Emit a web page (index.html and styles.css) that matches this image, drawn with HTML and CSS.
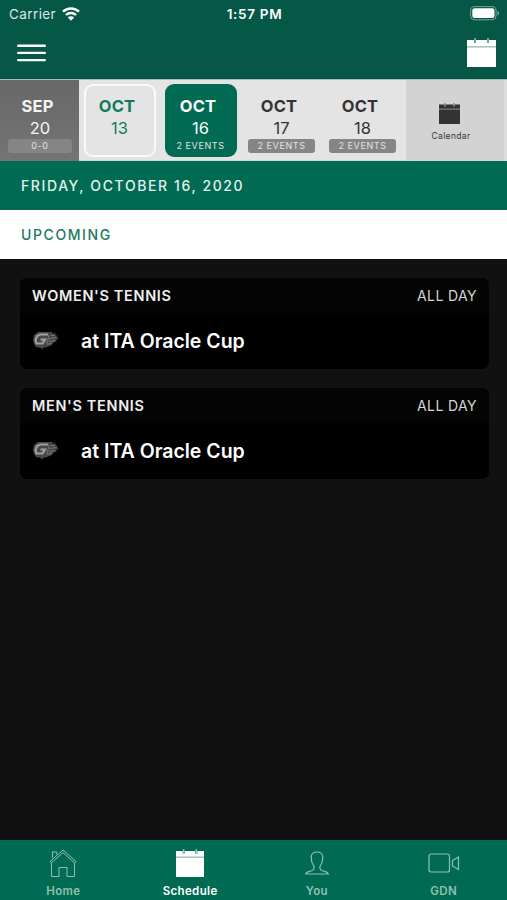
FILE: index.html
```html
<!DOCTYPE html>
<html lang="en">
<head>
    <meta charset="UTF-8">
    <meta name="viewport" content="width=device-width, initial-scale=1.0">
    <title>Schedule</title>
    <link rel="stylesheet" href="styles.css">
</head>
<body>
    <svg width="0" height="0" class="sprites">
        <symbol id="calendar" viewBox="0 0 29 29">
            <path fill="currentColor" d="M0 2h7v3h2V2h11v3h2V2h7v6H0zM0 9.3h29V29H0z"/>
            <path fill="currentColor" opacity=".65" d="M7.3 0h1.4v5H7.3zM20.3 0h1.4v5h-1.4zM0 8h29v1.3H0z"/>
        </symbol>
        <symbol id="team" viewBox="0 0 26 19">
            <path fill="#484848" d="M5 1h15l-1 2 4-1-1 2 3 1-2 1 3 1-3 2 1 1-4 2-1 2-5 2-4 1-1 2-1-2-5-1-2-3-1-4 1-5z"/>
            <path fill="none" stroke="#a0a0a0" stroke-width="2.2" d="M15 3.500H7.500L4 5 2.500 9l1 3.500h6L12 8.500H7.500"/>
            <path fill="none" stroke="#757575" d="M16 4l-2 9M18 4.500h4M16.500 7.500l7-1M16 10.500l6-1M14 13.500l5-1.500"/>
        </symbol>
    </svg>
    <div class="app">
        <header class="header">
            <div class="status">
                <div class="carrier">
                    <span>Carrier</span>
                    <svg width="18" height="14" viewBox="0 0 18 14" fill="none" stroke="#fff" stroke-width="2.4">
                        <path d="M1 4.700a11.500 11.500 0 0 1 16 0M4 8a7.300 7.300 0 0 1 10 0"/>
                        <path fill="#fff" stroke="none" d="M5.800 10.500a4.500 4.500 0 0 1 6.400 0L9 13.700z"/>
                    </svg>
                </div>
                <span class="time">1:57 PM</span>
                <svg class="battery" width="30" height="15" viewBox="0 0 30 15">
                    <rect x=".6" y=".6" width="25.500" height="13.200" rx="4" fill="none" stroke="#fff" stroke-opacity=".45"/>
                    <rect x="2.300" y="2.300" width="22.200" height="9.800" rx="2.300" fill="#fff"/>
                    <path fill="#fff" fill-opacity=".5" d="M27.500 5c2 .6 2 4 0 4.600z"/>
                </svg>
            </div>
            <div class="toolbar">
                <svg class="menu" width="29" height="18" viewBox="0 0 29 18" stroke="#fff" stroke-width="2.4" stroke-linecap="round">
                    <path d="M1.200 1.700h26.600M1.200 8.900h26.600M1.200 16.100h26.600"/>
                </svg>
                <svg class="header-calendar"><use href="#calendar"/></svg>
            </div>
        </header>

        <div class="days">
            <div class="day past">
                <div class="tile"><b>SEP</b><span>20</span><small>0-0</small></div>
            </div>
            <div class="day today">
                <div class="tile"><b>OCT</b><span>13</span></div>
            </div>
            <div class="day selected">
                <div class="tile"><b>OCT</b><span>16</span><small>2 EVENTS</small></div>
            </div>
            <div class="day">
                <div class="tile"><b>OCT</b><span>17</span><small>2 EVENTS</small></div>
            </div>
            <div class="day">
                <div class="tile"><b>OCT</b><span>18</span><small>2 EVENTS</small></div>
            </div>
            <div class="full-calendar">
                <svg><use href="#calendar"/></svg>
                <span>Calendar</span>
            </div>
        </div>

        <div class="date">FRIDAY, OCTOBER 16, 2020</div>
        <div class="section">UPCOMING</div>

        <main class="events">
            <div class="event">
                <div class="event-top"><b>WOMEN'S TENNIS</b><span>ALL DAY</span></div>
                <div class="event-body">
                    <svg><use href="#team"/></svg>
                    <span>at ITA Oracle Cup</span>
                </div>
            </div>
            <div class="event">
                <div class="event-top"><b>MEN'S TENNIS</b><span>ALL DAY</span></div>
                <div class="event-body">
                    <svg><use href="#team"/></svg>
                    <span>at ITA Oracle Cup</span>
                </div>
            </div>
        </main>

        <nav class="tabs">
            <div class="tab">
                <svg width="28" height="30" viewBox="0 0 28 30" fill="none" stroke="currentColor">
                    <path d="M1 13.500L14 2l13 11.500-1.300 1.500L14 4.600 2.300 15zM3.500 9.800V4h4.200v2.500M2.500 15v13.500H10v-9h8v9h7.500V15"/>
                </svg>
                <span>Home</span>
            </div>
            <div class="tab active">
                <svg width="28" height="30" viewBox="0 0 28 30"><use href="#calendar" y="1" width="28" height="28"/></svg>
                <span>Schedule</span>
            </div>
            <div class="tab">
                <svg width="28" height="30" viewBox="0 0 28 30" fill="none" stroke="currentColor" stroke-width="1.200">
                    <path d="M11 18.500c-2-3-3-6-2.800-9.500C8.400 5.500 11 4 14 4s5.600 1.500 5.800 5c.2 3.500-.8 6.500-2.800 9.500-.6 2.500.2 3.500 2.500 4.200l3.500 1.200c1.500.6 2 1.100 2.300 2.100H2.700c.3-1 .8-1.500 2.300-2.100l3.500-1.200c2.300-.7 3.100-1.700 2.500-4.200z"/>
                </svg>
                <span>You</span>
            </div>
            <div class="tab">
                <svg width="32" height="30" viewBox="0 0 32 30" fill="none" stroke="currentColor" stroke-width="1.200">
                    <rect x="1" y="6" width="20.500" height="18" rx="2"/>
                    <path d="M24.500 12.500l6-3.500v12.500l-6-3.500z"/>
                </svg>
                <span>GDN</span>
            </div>
        </nav>
    </div>
</body>
</html>
```

FILE: styles.css
```css
* {
    box-sizing: border-box;
}

body {
    margin: 0;
    font-family: Inter, "Liberation Sans", sans-serif;
    background-color: #111;
    color: #fff;
}

svg {
    display: block;
    flex: none;
}

.sprites {
    position: absolute;
}

.app {
    display: flex;
    flex-direction: column;
    height: 900px;
}

.header {
    height: 79px;
    background-color: #055846;
}

.status {
    display: grid;
    grid-template-columns: 1fr auto 1fr;
    align-items: center;
    height: 27px;
    padding: 0 7px 0 9px;
    font-size: 13.5px;
}

.carrier {
    display: flex;
    align-items: center;
    gap: 6px;
    color: #d8e8e2;
    letter-spacing: 0.4px;
}

.time {
    font-size: 13.5px;
    font-weight: 600;
    letter-spacing: 0.7px;
}

.battery {
    justify-self: end;
}

.toolbar {
    display: flex;
    justify-content: space-between;
    padding: 11px 11px 0 17px;
}

.menu {
    margin-top: 6px;
}

.header-calendar {
    width: 29px;
    height: 29px;
}

.days {
    display: grid;
    grid-template-columns: 79px 81px 81px 81px 84px 101px;
    height: 82px;
    background-color: #e4e4e4;
    border-top: 1px solid #a5bfb8;
    border-bottom: 1px solid #c4ddd5;
    color: #333;
}

.day {
    padding: 4px 4px 4px 4.5px;
}

.tile {
    display: flex;
    flex-direction: column;
    align-items: center;
    width: 72px;
    height: 73px;
    padding-top: 11px;
    border-radius: 9px;
}

.tile b {
    margin-right: 5px;
    font-size: 16.5px;
    font-weight: 700;
    line-height: 22px;
    letter-spacing: 0.2px;
}

.tile span {
    font-size: 16.5px;
    line-height: 22px;
}

.tile small {
    width: 67px;
    height: 14px;
    border-radius: 3px;
    background-color: #858585;
    color: #e2e2e2;
    font-size: 9px;
    line-height: 14px;
    letter-spacing: 0.6px;
    text-align: center;
}

.past {
    padding-left: 4px;
    background: linear-gradient(#686868, #747474);
    color: #f4f4f4;
}

.past small {
    width: 64px;
}

.today .tile {
    padding-top: 9px;
    border: 2px solid #fafafa;
    color: #117b59;
}

.selected .tile {
    background-color: #006b52;
    color: #fff;
}

.selected small {
    background: none;
}

.full-calendar {
    display: flex;
    flex-direction: column;
    align-items: center;
    padding: 23px 8px 0 0;
    background-color: #d3d3d3;
    border-right: 3px solid #dcdcdc;
    font-size: 8.5px;
    letter-spacing: 0.35px;
}

.full-calendar svg {
    width: 21px;
    height: 21px;
    margin: 0 4px 7px 0;
}

.date,
.section {
    height: 49px;
    padding-left: 21px;
    font-size: 14px;
    font-weight: 500;
    line-height: 49px;
    letter-spacing: 1.6px;
}

.date {
    background-color: #006b52;
    color: #e3f2ed;
}

.section {
    background-color: #fff;
    color: #187b5d;
}

.events {
    display: flex;
    flex-direction: column;
    flex: 1;
    gap: 19px;
    padding: 19px 18px 0 20px;
}

.event {
    height: 91px;
    border-radius: 7px;
    background-color: #000;
    overflow: hidden;
}

.event-top {
    display: flex;
    justify-content: space-between;
    height: 35px;
    padding: 0 12px;
    background-color: #040404;
    font-size: 14px;
    line-height: 36px;
    letter-spacing: 0.4px;
    color: #d5d5d5;
}

.event-top b {
    font-size: 14.5px;
    font-weight: 600;
    letter-spacing: 0.65px;
    color: #eee;
}

.event-body {
    display: flex;
    align-items: center;
    gap: 22px;
    height: 56px;
    padding-left: 13px;
    font-size: 19.5px;
    font-weight: 600;
}

.event-body svg {
    width: 26px;
    height: 19px;
    margin-bottom: 2px;
}

.tabs {
    display: grid;
    grid-template-columns: repeat(4, 1fr);
    height: 60px;
    background-color: #006b52;
    color: #8fc1b2;
}

.tab {
    display: flex;
    flex-direction: column;
    align-items: center;
    padding-top: 8px;
    font-size: 11.5px;
    font-weight: 600;
    line-height: 14px;
    letter-spacing: 0.35px;
}

.tab span {
    margin-top: 6px;
}

.active {
    color: #fff;
}
```
